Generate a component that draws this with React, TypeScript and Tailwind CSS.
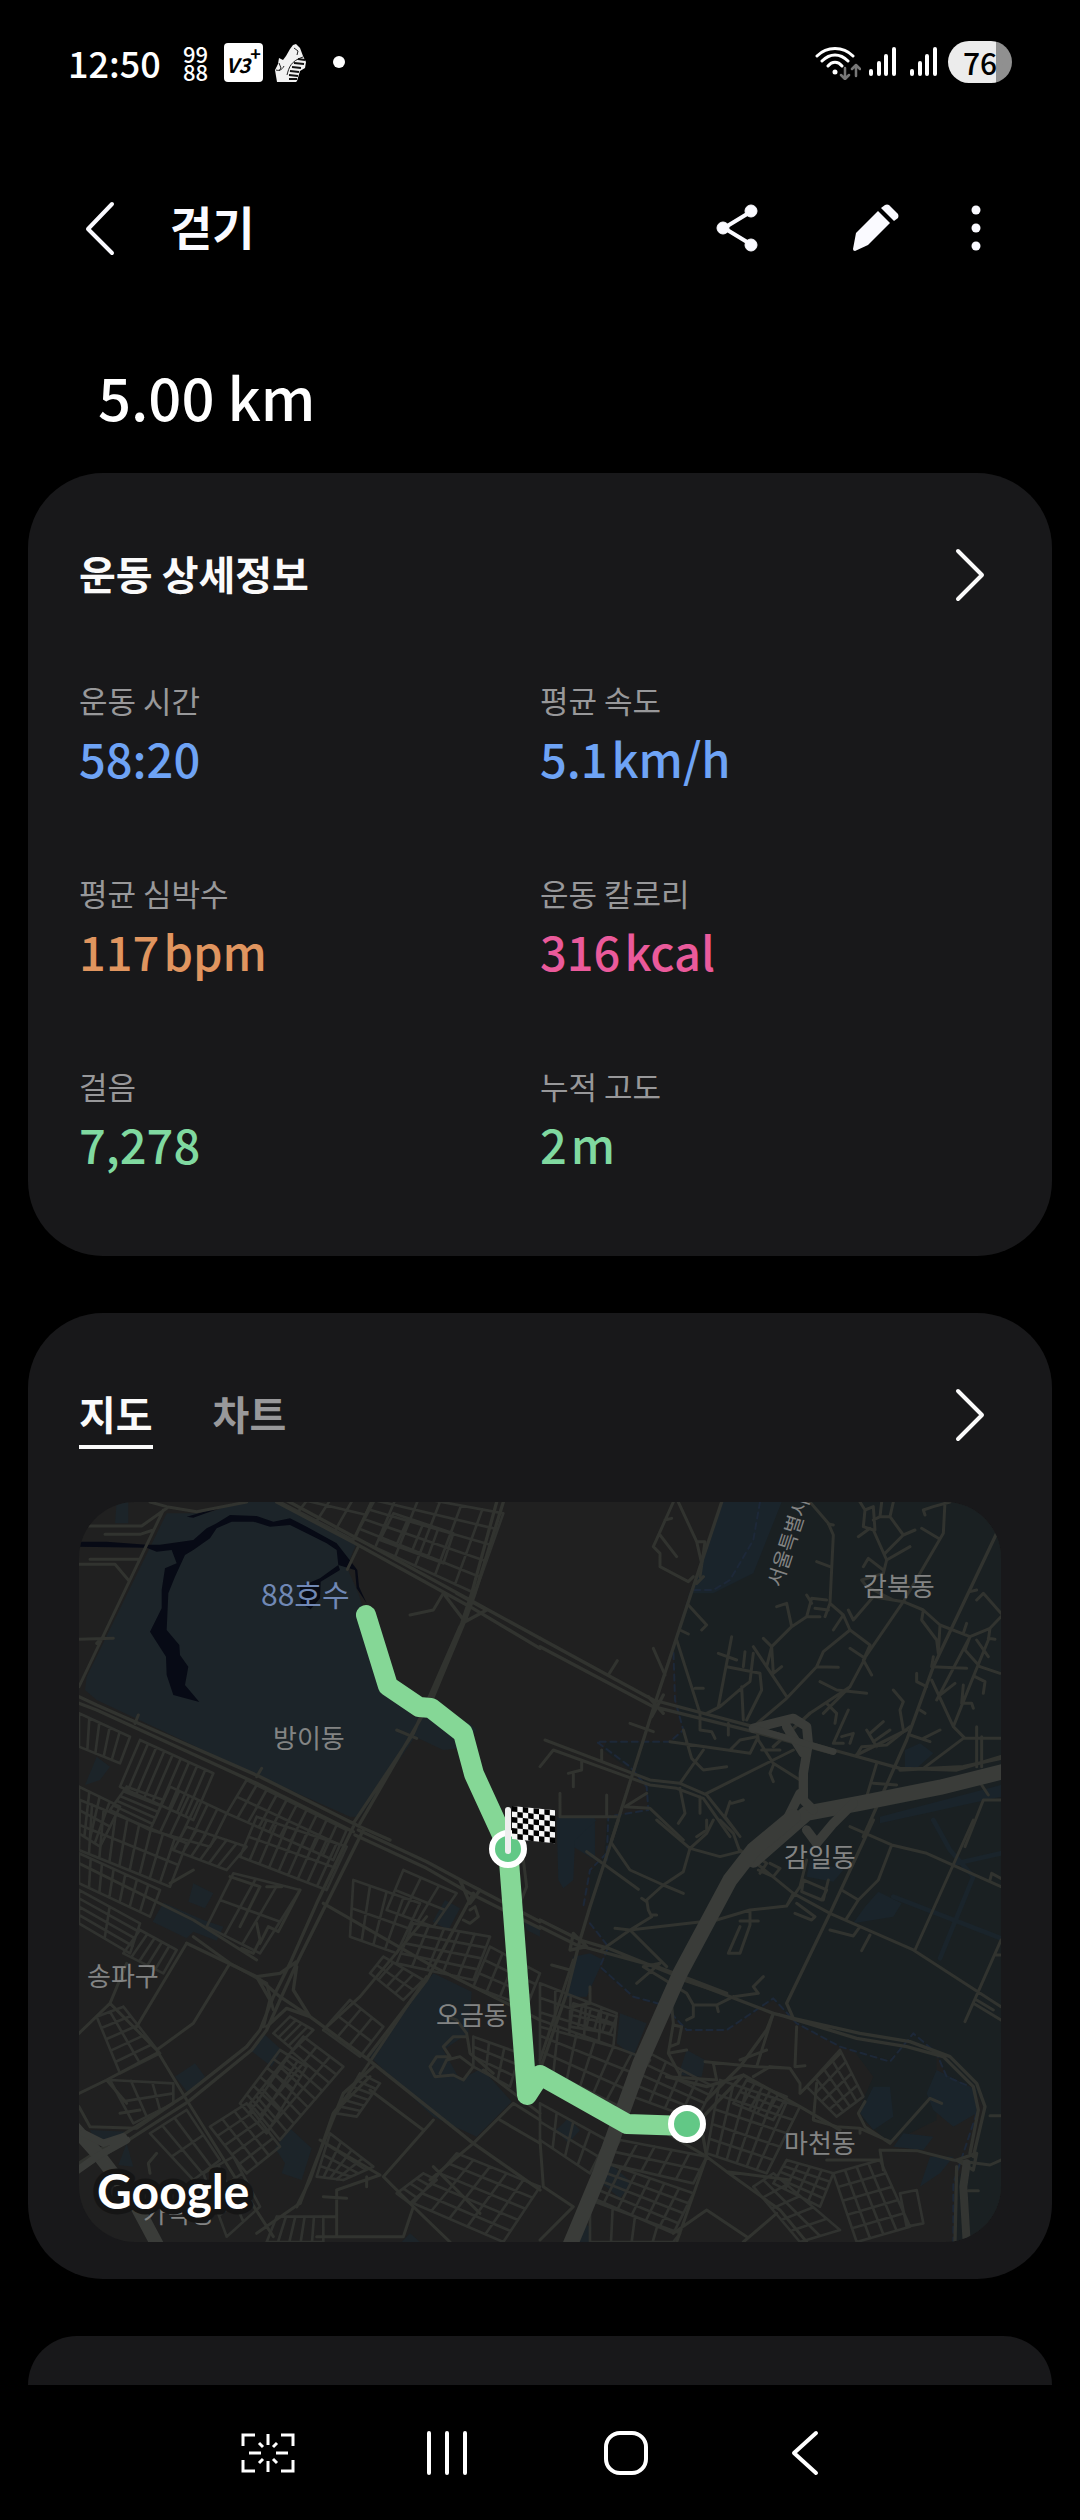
import React from "react";

interface Stat {
  label: string;
  value: string;
  unit?: string;
  color: string;
}

const stats: Stat[] = [
  { label: "운동 시간", value: "58:20", color: "text-[#6ea3f5]" },
  { label: "평균 속도", value: "5.1", unit: "km/h", color: "text-[#6ea3f5]" },
  { label: "평균 심박수", value: "117", unit: "bpm", color: "text-[#e0955f]" },
  { label: "운동 칼로리", value: "316", unit: "kcal", color: "text-[#ea5a9b]" },
  { label: "걸음", value: "7,278", color: "text-[#80d9a0]" },
  { label: "누적 고도", value: "2", unit: "m", color: "text-[#80d9a0]" },
];

// Street grid inside a quad: a-b is the top edge, d-c the bottom edge
const grid = (q: number[], cols: number, rows: number) => {
  const [ax, ay, bx, by, cx, cy, dx, dy] = q;
  const mix = (p: number, r: number, t: number) => Math.round(p + (r - p) * t);
  let d = "";
  for (let i = 0; i <= cols; i++) {
    const t = i / cols;
    d += `M${mix(ax, bx, t)} ${mix(ay, by, t)}L${mix(dx, cx, t)} ${mix(dy, cy, t)}`;
  }
  for (let i = 0; i <= rows; i++) {
    const t = i / rows;
    d += `M${mix(ax, dx, t)} ${mix(ay, dy, t)}L${mix(bx, cx, t)} ${mix(by, cy, t)}`;
  }
  return d;
};

// The map is drawn in four tiles, each with its own origin
const NW = "translate(-57 -366)";
const NE = "translate(1383 -366)";
const SW = "translate(-57 954)";
const SE = "translate(1383 954)";

const gridsNW = [
  grid([700, 330, 960, 330, 880, 480, 660, 366], 4, 2),
  grid([950, 330, 1330, 400, 1245, 640, 885, 475], 6, 5),
  grid([1000, 400, 1180, 460, 1150, 550, 960, 480], 4, 2),
  grid([57, 1000, 210, 1070, 180, 1150, 57, 1100], 5, 1),
  grid([240, 1080, 460, 1180, 400, 1320, 180, 1220], 9, 1),
  grid([200, 1220, 310, 1260, 270, 1350, 150, 1290], 1, 5),
  grid([330, 1220, 500, 1300, 450, 1400, 270, 1350], 6, 1),
  grid([560, 1200, 860, 1350, 820, 1440, 500, 1300], 10, 2),
  grid([57, 1220, 180, 1280, 120, 1400, 57, 1360], 4, 2),
];

const gridsSW = [
  grid([60, -60, 380, 70, 330, 200, 57, 90], 9, 2),
  grid([380, 20, 560, 80, 500, 150, 340, 90], 6, 1),
  grid([590, -10, 860, 80, 800, 210, 540, 110], 9, 2),
  grid([57, 100, 300, 210, 270, 290, 57, 190], 7, 1),
  grid([57, 210, 240, 310, 210, 400, 57, 310], 2, 4),
  grid([240, 330, 350, 390, 310, 460, 190, 400], 5, 1),
  grid([110, 590, 190, 560, 300, 700, 180, 760], 2, 5),
  grid([150, 780, 340, 790, 340, 850, 220, 910], 3, 2),
  grid([520, 160, 720, 210, 600, 400, 440, 320], 3, 2),
  grid([880, 180, 1080, 250, 1010, 400, 870, 350], 4, 2),
  grid([1030, 150, 1190, 220, 1120, 320, 980, 270], 3, 2),
  grid([1060, 310, 1290, 350, 1240, 480, 1010, 430], 5, 4),
  grid([970, 410, 1090, 480, 1030, 540, 930, 460], 4, 2),
  grid([1290, 380, 1440, 460, 1400, 560, 1240, 500], 4, 3),
  grid([870, 540, 970, 620, 900, 710, 790, 630], 3, 2),
  grid([690, 590, 760, 630, 700, 690, 640, 640], 4, 1),
  grid([730, 650, 850, 740, 660, 960, 570, 850], 3, 9),
  grid([660, 690, 740, 740, 620, 940, 540, 850], 3, 6),
  grid([450, 920, 560, 850, 660, 980, 560, 1060], 3, 5),
  grid([900, 760, 960, 790, 890, 890, 830, 880], 1, 6),
  grid([810, 940, 940, 1040, 850, 1080, 770, 1070], 4, 4),
  grid([270, 940, 380, 870, 480, 1020, 400, 1080], 3, 2),
  grid([430, 1060, 520, 1010, 600, 1160, 500, 1250], 2, 3),
  grid([1240, 650, 1380, 700, 1350, 800, 1240, 740], 3, 3),
  grid([1190, 1000, 1440, 1100, 1330, 1266, 1060, 1150], 5, 5),
  grid([650, 1190, 790, 1190, 790, 1266, 620, 1266], 5, 1),
  grid([1090, 1060, 1130, 1080, 1050, 1150, 1010, 1120], 1, 4),
];

const gridsSE = [
  grid([0, 490, 230, 580, 220, 680, 0, 620], 5, 3),
  grid([0, 600, 330, 720, 240, 860, 0, 740], 6, 3),
  grid([100, 550, 230, 590, 210, 640, 90, 620], 5, 2),
  grid([330, 700, 520, 800, 470, 900, 280, 830], 4, 4),
  grid([0, 850, 200, 960, 150, 1060, 0, 960], 4, 2),
  grid([240, 960, 500, 1010, 460, 1090, 200, 1030], 5, 2),
  grid([200, 1030, 460, 1120, 400, 1240, 150, 1130], 6, 4),
  grid([150, 1140, 420, 1240, 400, 1266, 150, 1266], 4, 1),
  grid([540, 780, 780, 860, 680, 1060, 500, 1000], 6, 5),
  grid([620, 780, 740, 830, 700, 900, 580, 850], 5, 2),
  grid([900, 690, 970, 830, 890, 890, 800, 800], 4, 4),
  grid([740, 1020, 880, 1060, 840, 1160, 700, 1090], 4, 4),
  grid([640, 1100, 700, 1060, 900, 1230, 780, 1266], 2, 5),
  grid([880, 1060, 1020, 1020, 1110, 1220, 950, 1266], 4, 5),
  grid([1080, 1120, 1130, 1110, 1150, 1210, 1100, 1220], 1, 1),
];

const mapLabels = [
  { text: "방이동", x: 194, y: 246 },
  { text: "감북동", x: 784, y: 94 },
  { text: "송파구", x: 8, y: 484 },
  { text: "오금동", x: 357, y: 523 },
  { text: "감일동", x: 705, y: 365 },
  { text: "마천동", x: 705, y: 651 },
  { text: "가락동", x: 64, y: 721 },
];

const ChevronRight = () => (
  <svg className="w-[34px] h-[60px]" viewBox="0 0 34 60" fill="none" stroke="#fafafa" strokeWidth="4" strokeLinecap="round" strokeLinejoin="round">
    <path d="M5 6l24 24L5 54" />
  </svg>
);

const SignalBars = () => (
  <svg className="w-[27px] h-[30px]" viewBox="0 0 27 30" stroke="#fff" strokeWidth="4" strokeLinecap="round">
    <path d="M2 24v3M10 16v11M17 9v18M25 2v25" />
  </svg>
);

const StatusBar = () => (
  <div className="flex items-center justify-between h-[124px] shrink-0 pl-[68px] pr-[68px] text-white">
    <div className="flex items-center">
      <span className="w-[115px] text-4xl font-medium">12:50</span>
      <span className="w-[41px] text-[22px] leading-[18px] font-medium">
        99
        <br />
        88
      </span>
      <span className="flex items-start w-[39px] h-[39px] pl-[2px] rounded bg-white text-black font-bold">
        <span className="pt-[8px] text-[20px] leading-[28px] italic">V3</span>
        <span className="text-[18px] leading-[20px]">+</span>
      </span>
      <svg className="w-[32px] h-[39px] ml-[12px]" viewBox="0 0 32 39">
        <path d="M15 6l3-4 3-1 4 4 3 8 3 6-1 6-5 3-3 10-1 1H2L0 27l3-6 1-6 4 2 3-4z" fill="#f2f2f2" />
        <path d="M12 32c2-8 4-14 16-18M4 20l2 5-2 3M19 5l4 3-1 4M1 27c3 1 6 0 8-4" fill="none" stroke="#222" strokeWidth="1" />
        <path d="M14 36h8M14 32l9 1M15 28l9 1M17 24l9 1M19 20l10 1M23 16l7 1" stroke="#111" strokeWidth="2" />
      </svg>
      <span className="w-3 h-3 rounded-full bg-white ml-[26px]" />
    </div>
    <div className="flex items-center">
      <svg className="w-[46px] h-[36px]" viewBox="0 0 46 36" fill="none" strokeLinecap="round" strokeLinejoin="round">
        <path d="M2 12c10-10 26-10 36 0M7 17c8-8 18-8 26 0M13 22c4-5 10-5 14 0" stroke="#fff" strokeWidth="3" />
        <circle cx="20" cy="28" r="2.5" fill="#fff" />
        <path d="M30 24v10M26 31l4 4 4-4M41 32V22M37 25l4-4 4 4" stroke="#777" strokeWidth="2.5" />
      </svg>
      <span className="ml-[8px]">
        <SignalBars />
      </span>
      <span className="ml-[14px]">
        <SignalBars />
      </span>
      <span className="flex items-center justify-center w-[64px] h-[42px] ml-[11px] rounded-full bg-linear-to-r from-[#ececec] from-75% to-[#909090] to-75% text-black text-[30px] leading-[42px] font-medium">
        76
      </span>
    </div>
  </div>
);

const Header = () => (
  <header className="flex items-center h-[208px] shrink-0 pl-[78px] pr-[84px] text-[#fafaff]">
    <button type="button" aria-label="뒤로" className="w-[92px]">
      <svg className="w-[44px] h-[60px]" viewBox="0 0 44 60" fill="none" stroke="currentColor" strokeWidth="4" strokeLinecap="round" strokeLinejoin="round">
        <path d="M34 6L10 31l24 24" />
      </svg>
    </button>
    <h1 className="flex-1 pb-[6px] text-[46px] leading-[60px] font-bold">걷기</h1>
    <button type="button" aria-label="공유" className="mr-[78px]">
      <svg className="w-[60px] h-[60px]" viewBox="0 0 60 60" fill="currentColor" stroke="currentColor">
        <path d="M44 13L16 30l28 17" fill="none" strokeWidth="4" />
        <circle cx="43" cy="13" r="6" />
        <circle cx="15" cy="30" r="6" />
        <circle cx="43" cy="47" r="6" />
      </svg>
    </button>
    <button type="button" aria-label="수정" className="mr-[50px]">
      <svg className="w-[60px] h-[60px]" viewBox="0 0 60 60" fill="currentColor">
        <path d="M7 51l3-16 22-22 12 12-22 22-13 6q-2 0-2-2z" />
        <path d="M35 10l4-3q2-1 4 0l9 9q1 2 0 4l-4 3z" />
      </svg>
    </button>
    <button type="button" aria-label="더보기">
      <svg className="w-[40px] h-[60px]" viewBox="0 0 40 60" fill="currentColor">
        <circle cx="20" cy="12" r="4.5" />
        <circle cx="20" cy="30" r="4.5" />
        <circle cx="20" cy="48" r="4.5" />
      </svg>
    </button>
  </header>
);

const RouteMap = () => (
  <svg className="block w-full h-auto mt-[53px] rounded-[56px]" viewBox="0 0 922 740" role="img" aria-label="운동 경로 지도">
    <rect width="922" height="740" fill="#202020" />
    <g transform="scale(0.33333)" fill="none" strokeLinecap="round" strokeLinejoin="round">
      {/* Land east of the city border */}
      <g fill="#1a2022">
        <path transform={NE} d="M545 366L450 640L400 800L415 1000L430 1050L390 1085H200L190 1110L270 1170L320 1220L325 1290L205 1310L190 1440H1383V366Z" />
        <path transform={SE} d="M200 0V100L150 160V310L205 380L185 450L280 530L370 560L440 630H560L700 540L770 610L900 680L1050 720L1120 640L1190 700L1220 770L1300 800L1330 860L1300 1000L1250 1080L1240 1266H1383V0Z" />
        <path transform={SE} d="M940 690L1050 720L1120 640L1190 700V900L1050 970L970 900L960 860L1000 770Z" />
      </g>

      {/* Parks */}
      <g fill="#1c2429">
        <path transform={NW} d="M320 400L440 400L540 366H650L890 490L860 560L895 640L985 915L1060 1010L1230 1030L1250 1050L1200 1105L1150 1110L1065 1070L900 1310H870L600 1190L110 960L75 930L80 890ZM170 366H205V430H165ZM110 1130L150 1160L120 1200L75 1215Z" />
        <path transform={SW} d="M400 190L460 220L435 265L385 245ZM310 248L430 300L490 320L470 362L400 335L380 355L278 305ZM1155 240L1200 265L1165 330L1118 305ZM610 640L665 690L635 740L570 690ZM405 730L435 770L385 820L345 770ZM690 925L755 985L725 1080L665 1060L675 1030L645 985ZM1120 460L1235 515L1225 640L1150 690L1200 780L1265 745L1355 845L1250 950L1120 890L930 710ZM90 930L200 935L160 960L100 955ZM200 970L220 1040L175 1035ZM1050 1240L1080 1266H1025ZM1390 300L1440 330V350L1400 330Z" />
        <path transform={SE} d="M240 580L320 610L280 710L230 670ZM440 690L495 720L485 770L415 765ZM85 895L120 930L85 970L48 930ZM215 1035L278 1090L240 1135L180 1085ZM120 1210L155 1220L150 1266H110Z" />
      </g>
      <g fill="#1a242b">
        <path transform={NE} d="M545 366H725L640 580L520 640H455L490 520ZM1095 1110L1140 1090L1180 1120L1130 1165H1095ZM1020 1310L1383 1215V1250L1020 1330ZM50 1312H165V1440L100 1400Z" />
        <path transform={SE} d="M1015 215L1085 250L1060 290L940 310L975 260ZM810 120L910 150L880 185L800 170ZM50 0H170L105 60L100 180L70 205L55 180ZM1000 800L1050 800L1060 890L1000 930L960 880ZM1190 750L1310 810V880L1240 920L1180 870L1160 820ZM1090 940L1180 950L1150 990L1060 980ZM1170 1010H1240L1200 1060L1140 1100ZM150 400L190 420L140 530H80L100 410Z" />
      </g>
      <path transform={SE} d="M1180 0L1230 90L1300 170L1200 415M1060 230L1383 355M1250 130L1383 100" stroke="#1a242b" strokeWidth="14" />

      {/* Water */}
      <path
        transform={NW}
        fill="#070a15"
        d="M57 485L140 485L260 494L300 494L400 480L440 445L470 430L510 405L590 408L640 425L690 415L740 440L830 490L865 535L892 570L897 620L920 670L890 625L885 570L835 555L830 510L800 490L740 460L690 435L630 440L580 425L515 425L470 445L450 475L400 510L375 525L345 590L325 640L320 750L358 795L360 825L385 860L375 915L418 966L340 945L320 885L318 830L270 755L305 685L305 630L315 565L350 550L335 510L290 515L260 503L57 500ZM835 555L780 595L720 620L722 670L752 688L780 655L782 605L840 570ZM380 410L520 370L400 413Z"
      />

      {/* City border */}
      <g stroke="#1d2838" strokeWidth="6" strokeDasharray="18 14">
        <path transform={NE} d="M660 366L640 480L570 600L520 630H455L400 800L405 960L430 1050L390 1085L170 1085L270 1160L320 1220L325 1290L205 1310L200 1440" />
        <path transform={SE} d="M200 100L150 150L130 260M150 310L205 380L180 440L280 530L370 555L440 630H560L700 535L770 610L900 680L1050 725L1120 640L1190 700L1220 770L1290 800M1310 880L1240 1090V1266" />
      </g>

      {/* Street grids */}
      <g stroke="#30322f" strokeWidth="8">
        <path transform={NW} d={gridsNW.join("")} />
        <path transform={SW} d={gridsSW.join("")} />
        <path transform={SE} d={gridsSE.join("")} />
      </g>

      {/* Minor roads */}
      <g stroke="#31332f" strokeWidth="9">
        <path
          transform={NW}
          d="M80 438H245L320 385M135 463H240L280 450M90 538H240M57 553H165L205 600M57 778L160 775M110 790L130 770M310 390L57 920M270 366L320 380L410 395L560 366M862 568L895 500M885 470L935 366M1050 705L1120 690L1150 640M1010 1050L1070 1075M225 1030L235 1005M590 1190L605 1165"
        />
        <path
          transform={NE}
          d="M400 366L340 500L360 520V560L445 605L460 590M360 465L410 530M375 420L395 415M415 366L470 485L485 550M470 485H495L480 590M340 805L375 885M205 885L232 842M270 1030L340 1055M15 1080L330 1200L420 1210L500 1245L600 1370M0 1160L40 1110L330 1215L410 1225L490 1255L570 1370M125 1145V1170L85 1180M100 1180V1220M60 1240V1310H230M200 1245V1310M185 1110V1140M255 1280L320 1240M255 1280L330 1285L430 1380M445 675L500 735L485 750M420 750L445 762M410 780L480 1000M465 925H490M480 1000V1050L515 1055L525 1075M500 1000L540 980L610 920L630 905L640 820M575 770L535 980M535 820L590 840M560 860L660 880L665 930L620 1020M605 920L610 1020M615 815L610 860M640 800L740 950M565 1030V1065M680 860L695 800L755 740L740 670L710 680M695 800L670 775M695 800L700 880L725 860M755 740L800 710L815 655L860 660M800 710H840M800 645L815 670M810 366L865 430L880 465L870 670L910 705L930 750L990 795L970 840L995 885M830 545L870 560M865 432L880 435M870 670L855 710M825 685L865 690M910 705L880 750M925 690L940 720L1000 650L1090 665L1150 690L1200 735L1290 770L1350 745L1383 710M930 750L850 815L830 860L740 955L640 1040M830 860L895 862M930 805L975 835L930 920L810 1000M840 905L890 930L980 940M930 920L850 1000M960 366L975 390L970 440L1000 450L1040 540L1110 500M975 390L1000 380L1005 450M1025 366L1020 410L1000 420M1060 366L1050 410L1090 465L1125 450M1050 410L1020 410M1090 465L1035 520M955 470L990 445M970 560L985 535L1030 570M1040 540L1030 580L965 600L980 620L1060 660L1090 665M1215 366L1210 460L1090 665L970 840M1155 405L1150 390L1180 380L1230 366M1195 475L1145 445M1150 690L1145 720L1190 780L1195 820M1200 735L1195 820M1290 770L1190 960M1290 770L1275 810L1320 860L1380 880M1350 745L1345 780L1300 890L1240 1040L1275 1075H1383M1345 775L1365 778M1310 780L1345 830M1305 890L1335 905L1330 940M1180 830L1175 860L1280 865M1175 900L1240 1040M1200 945L1245 910M1265 970H1295L1300 985M1270 915L1265 970M1130 880L1130 905L1160 920M1060 930L1090 965L1080 990L1090 1050M1110 1065L1170 1085M1150 1075L1200 1050M1140 990L1155 1000M1310 660L1330 640L1383 700M1290 635L1310 630M1280 730L1270 760M1150 1165L1270 1075M1310 1040V1160M1325 1070V1160M860 970L890 1000L885 1030M925 990L880 1090L910 1090M905 1070L940 1060L930 1090M980 1050L1010 1100M990 1060L1030 1025M1000 1085L1050 1050M950 1125L965 1100L1040 1095L1110 1040M650 1040L655 1080L700 1150L780 1200M665 1110H720M560 1160L490 1170L455 1135L430 1050M490 1110L420 1210M760 1110L500 1240M700 1155L690 1180L700 1205M390 1085L630 1120L650 1080M570 1110L600 1080L650 1070M420 1225L435 1300L415 1330M480 1250V1300M570 1265L555 1310L600 1370M575 1270L610 1260M500 1320V1350L470 1370M1010 1150L980 1250M1000 1210L1070 1215M1325 1215L1345 1245M1383 1260H1330L1275 1400"
        />
        <path
          transform={SW}
          d="M57 130L400 300L590 420M57 640L150 550M150 550L290 690L380 840L530 1080L640 1250M200 430L150 550M230 620L380 370M290 690L400 610L510 430M57 820L140 780L290 700M140 780L200 850M90 920L230 925L340 850M57 860L90 920M180 880L240 870M510 170L600 200L540 320M620 200H665M720 210L655 335L625 320L600 370M590 310L600 360L580 400L545 385M400 350L510 430L620 490L640 570M820 880L930 770M790 630L900 530L1100 290M820 880L860 830L1100 470M930 810L1090 930M970 1070L1120 900M970 1070L1060 1160L1030 1250H770M830 1110L960 1065L780 960M920 1070V1100M830 1110V1250M790 1130L860 1135M790 1190H830M1240 970L1180 1020L1110 1080M1240 970L1360 850L1440 900M1270 750L1440 880M1320 900L1440 970M1060 1160L1170 1266M1120 1040L1260 1180M1230 270L1245 260L1255 290L1230 310L1210 300M1220 640L1190 600L1160 590M1220 640L1230 700L1300 760M1220 650L1180 650L1150 680L1170 710L1130 710L1110 740L1125 770L1180 765L1210 780L1240 740L1200 710L1160 720L1140 760M270 1060L265 1030L290 1000M590 1240L720 1150M330 190L400 150M1390 120L1400 200L1380 250"
        />
        <path
          transform={SE}
          d="M215 70L270 150L370 195L430 155L450 85L350 0M450 85L540 110L600 95M450 85L500 40L520 0M600 95L580 40L540 0M140 95L295 208M370 195L320 240L325 270L335 290L270 330L225 325M370 195L430 220M305 235L320 245M335 285H350M270 330L380 440M185 390L270 330L530 300L630 270L740 258L780 200L800 120M630 275V315L600 400L565 400L600 320M600 303H655M310 440L440 520L460 555L530 555L580 530M310 440L360 430L290 490M460 555V590L440 600M430 480L520 510M640 500L670 470M640 500L655 520L580 530M530 555L535 575M600 90L760 220L870 280L1120 390L1383 560M760 220L740 258M770 250L825 290L815 300L765 280M650 110L680 130L660 160M690 130L720 145L700 170L655 150M790 180L860 210L845 240L785 215ZM865 180L850 240M905 210L955 240L920 295M955 240L1015 180L1055 75M870 330L940 348L960 320M990 345L965 392M1125 390L1300 0M930 20L1055 75L1160 100L1383 200M1350 180L1355 160L1383 175M1275 605L1383 360M1300 550L1383 600M1310 540L1360 570M1365 405H1383M100 420L0 720M35 435L90 450M150 500V550L100 560M390 500L400 610L385 700L420 765M400 615L425 620L415 670L390 680M385 700L440 690M495 725L650 740L700 580M520 730L530 780L380 770M600 720L680 690M650 740L750 745L780 790V820M770 620L765 740L795 737M750 745L690 740L640 770M780 820L900 700M830 790L820 900L890 920L960 925L1050 965M975 845L955 880L975 920L1050 970L1170 835L1205 850M1020 990L1130 992L1240 1020M1020 990L1030 1050M860 1020L1020 1020M960 930V940M500 1010L560 1055L750 1080M560 1055L720 1170L800 1266M710 1180L610 1266M500 1010L410 1266M500 1010L380 940M0 960L10 1100L100 1160L0 1260M1240 1020L1310 1030L1350 1035L1383 1020M1350 887H1383M1285 1112H1315M400 1240L500 1170L620 1250"
        />
      </g>

      {/* Main roads */}
      <g stroke="#31332f" strokeWidth="10">
        <path
          transform={NW}
          d="M650 366L885 490L1230 680L1440 805M670 356L900 480L1240 665L1440 775M1330 366L1245 640L1220 710M1310 366L1235 640L1205 730L1110 960M1220 710L1120 950L900 1330M1200 740L1060 1060L880 1330M57 950L110 975L600 1190L900 1340M57 970L110 990L590 1210L880 1355M1190 640L1280 690L1215 725L1150 640M900 1340L990 1380"
        />
        <path
          transform={NE}
          d="M0 775L340 960L640 1040L880 1110L1080 1165L1250 1170L1383 1130M0 800L340 980L640 1055L880 1120M545 366L460 620L345 970L215 1380M1370 460L1180 860L1100 1080L970 1370M325 950L370 1000M370 945L335 1010M490 590L470 610M1080 1170L1270 1160L1383 1135M1100 1050L950 1125M810 1000L700 1100"
        />
        <path
          transform={SW}
          d="M880 20L770 250L690 430L640 530L600 630L560 680L370 830L180 950L57 1030M910 30L800 250L710 430L660 540L620 630L575 690L385 845L190 970L57 1050M895 30L1100 125L1240 200L1440 305M885 45L1100 145L1230 220L1440 325M590 470L660 530L750 590L920 715L1240 970L1440 1110M380 370L590 470L660 460L710 425M590 470L630 540L610 620M710 440L700 510L750 590L680 565L620 620M790 250L1120 440L1440 600M940 740L850 820L770 1020L720 1150M860 830L820 880L750 1080L710 1160M920 715L1100 480L1240 220M1200 180L1260 210L1230 250Z"
        />
        <path
          transform={SE}
          d="M0 300L120 360L205 385L440 480L700 580L760 595L960 640L1110 665L1230 710L1310 790L1335 860L1300 1010M0 320L110 375L350 440L560 520M720 585L950 655L1100 680L1210 710L1300 800L1315 870L1290 1000M235 0L150 260L120 360L80 520L0 750M1000 0L870 280L740 550L760 595M700 580L680 630L600 740L500 840M100 340L140 380L90 390ZM380 770L500 800L610 765L780 860L900 930M500 1010L480 900L610 765M1250 1020L1300 1050L1310 1000ZM1250 1040L1245 1266"
        />
      </g>

      {/* Expressway */}
      <g stroke="#3a3c39">
        <path transform={NE} d="M1400 1172L1200 1222L960 1270L800 1300L640 1440" strokeWidth="46" />
        <path transform={NE} d="M640 1045L760 1015L800 1040L805 1090L790 1180V1260L820 1290M740 1040L790 1120M780 1240L740 1320L660 1390M800 1350L830 1390L880 1330L940 1270" strokeWidth="28" />
        <path transform={NE} d="M640 1045L880 1115" strokeWidth="20" />
        <path transform={SE} d="M760 -10L640 90L570 180L420 460L300 730L180 1060L80 1300" strokeWidth="46" />
        <path transform={SW} d="M40 920L120 1010L220 1140L300 1290" strokeWidth="40" />
        <path transform={SW} d="M40 1060L110 1010L200 960M70 940L130 970L190 950" strokeWidth="22" />
        <path transform={SE} d="M1280 1030L1270 1100L1280 1266" strokeWidth="24" stroke="#333532" />
      </g>
    </g>

    {/* Place names */}
    <g className="text-[26px]" fill="#838484">
      {mapLabels.map((label) => (
        <text key={label.text} x={label.x} y={label.y}>
          {label.text}
        </text>
      ))}
      <text x="182" y="104" className="text-[30px]" fill="#7088b5">
        88호수
      </text>
      <text transform="translate(702 86) rotate(-72)" className="text-[20px]">
        서울특별시
      </text>
    </g>

    {/* Walked route */}
    <path d="M287 113L309 184L340 205L352 206L384 231L395 272L429 346L448 593L461 573L548 622L608 624" fill="none" stroke="#85d796" strokeWidth="20" strokeLinecap="round" strokeLinejoin="round" />
    <circle cx="429" cy="347" r="16" fill="#62c886" stroke="#fff" strokeWidth="6" />
    <circle cx="608" cy="622" r="16" fill="#62c886" stroke="#fff" strokeWidth="6" />
    <g transform="matrix(1 0.1 0 1 433 304)">
      <rect width="43" height="33" fill="#f5f5f5" />
      {Array.from({ length: 48 }, (_, i) => {
        const col = i % 8;
        const row = Math.floor(i / 8);
        if ((col + row) % 2) return null;
        return <rect key={i} x={col * 5.4} y={row * 5.5} width="5.4" height="5.5" fill="#000" />;
      })}
    </g>
    <path d="M429 308V349" stroke="#eee" strokeWidth="6" strokeLinecap="round" />

    <text x="18" y="707" className="font-[Lato] text-5xl font-bold" fill="#fff" stroke="#151515" strokeWidth="11" strokeLinejoin="round" paintOrder="stroke">
      Google
    </text>
  </svg>
);

const NavBar = () => (
  <nav className="grid grid-cols-4 items-center justify-items-center h-[135px] shrink-0 pl-[178px] pr-[186px] bg-black text-white">
    <button type="button" aria-label="화면 캡처">
      <svg className="w-[54px] h-[44px]" viewBox="0 0 54 44" fill="none" stroke="currentColor" strokeWidth="3">
        <path d="M2 15V4h12M40 4h12v11M52 29v11H40M14 40H2V29" />
        <path d="M27 3v11M27 30v11M8 22h12M35 22h12M18 12l4 4M36 12l-4 4M18 32l4-4M36 32l-4-4" />
      </svg>
    </button>
    <button type="button" aria-label="최근 앱">
      <svg className="w-[44px] h-[44px]" viewBox="0 0 44 44" stroke="currentColor" strokeWidth="4" strokeLinecap="round">
        <path d="M4 2v40M22 2v40M40 2v40" />
      </svg>
    </button>
    <button type="button" aria-label="홈">
      <svg className="w-[44px] h-[44px]" viewBox="0 0 44 44" fill="none" stroke="currentColor" strokeWidth="4">
        <rect x="2" y="2" width="40" height="40" rx="14" />
      </svg>
    </button>
    <button type="button" aria-label="뒤로 가기">
      <svg className="w-[28px] h-[58px]" viewBox="0 0 28 58" fill="none" stroke="currentColor" strokeWidth="4" strokeLinecap="round" strokeLinejoin="round">
        <path d="M25 9L3 29l22 20" />
      </svg>
    </button>
  </nav>
);

const App: React.FC = () => {
  return (
    <div className="flex flex-col h-screen overflow-hidden bg-black font-['Noto_Sans_CJK_KR',sans-serif]">
      <StatusBar />
      <Header />
      <main className="flex flex-col flex-1 min-h-0 overflow-hidden px-[28px]">
        <p className="h-[141px] shrink-0 pl-[70px] pt-[28px] text-[58px] leading-[72px] font-medium text-white">5.00 km</p>

        {/* Workout details */}
        <section className="shrink-0 px-[51px] pt-[72px] pb-[82px] rounded-[75px] bg-[#18181a]">
          <div className="flex items-start justify-between h-[60px] pr-[14px]">
            <h2 className="text-[40px] leading-[56px] font-bold text-[#fafafa]">운동 상세정보</h2>
            <button type="button" aria-label="운동 상세정보 보기">
              <ChevronRight />
            </button>
          </div>
          <dl className="grid grid-cols-2 gap-y-[85px] mt-[75px]">
            {stats.map((stat) => (
              <div key={stat.label}>
                <dt className="text-[31px] leading-[40px] text-[#98989a]">{stat.label}</dt>
                <dd className={`flex gap-[4px] mt-2 text-[47px] leading-[60px] font-medium ${stat.color}`}>
                  <span>{stat.value}</span>
                  {stat.unit && <span>{stat.unit}</span>}
                </dd>
              </div>
            ))}
          </dl>
        </section>

        {/* Map */}
        <section className="shrink-0 mt-[57px] px-[51px] pt-[72px] pb-[37px] rounded-[75px] bg-[#18181a]">
          <div className="flex items-start justify-between pr-[14px]">
            <div className="flex gap-[60px] text-[40px] leading-[56px] font-bold" role="tablist">
              <button type="button" role="tab" aria-selected="true" className="pb-[4px] border-b-4 border-[#fafafa] text-[#fafafa]">
                지도
              </button>
              <button type="button" role="tab" aria-selected="false" className="pb-[4px] border-b-4 border-transparent text-[#98989a]">
                차트
              </button>
            </div>
            <button type="button" aria-label="지도 보기">
              <ChevronRight />
            </button>
          </div>
          <RouteMap />
        </section>

        <section className="flex-1 min-h-[49px] mt-[57px] rounded-t-[75px] bg-[#18181a]" />
      </main>
      <NavBar />
    </div>
  );
};

export default App;
